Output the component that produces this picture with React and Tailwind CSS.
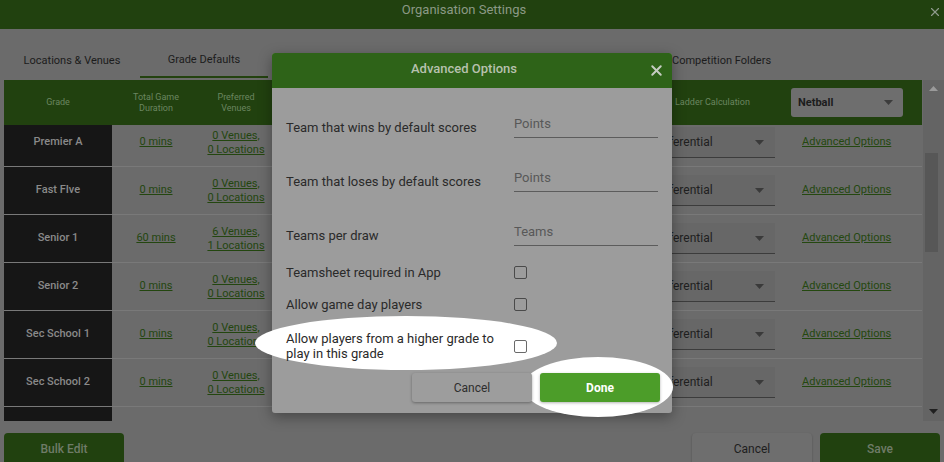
import React from 'react';
import { X } from 'lucide-react';

const rows = [
  { grade: 'Premier A', mins: '0 mins', venues: '0 Venues,', locations: '0 Locations' },
  { grade: 'Fast FIve', mins: '0 mins', venues: '0 Venues,', locations: '0 Locations' },
  { grade: 'Senior 1', mins: '60 mins', venues: '6 Venues,', locations: '1 Locations' },
  { grade: 'Senior 2', mins: '0 mins', venues: '0 Venues,', locations: '0 Locations' },
  { grade: 'Sec School 1', mins: '0 mins', venues: '0 Venues,', locations: '0 Locations' },
  { grade: 'Sec School 2', mins: '0 mins', venues: '0 Venues,', locations: '0 Locations' },
];

const cols = 'grid-cols-[108px_88px_72px_378px_140px_132px]';

const Caret = ({ up, className }) => (
  <svg width="9" height="5" viewBox="0 0 9 5" className={className}>
    <path d={up ? 'M0 5h9L4.5 0z' : 'M0 0h9L4.5 5z'} fill="currentColor" />
  </svg>
);

const Row = ({ r }) => (
  <div className={`grid h-[48px] ${cols} border-b border-[#797979]`}>
    <div className="flex items-center justify-center bg-[#161616] text-[11px] font-medium text-[#8a8a8a]">{r.grade}</div>
    <div className="flex items-center justify-center text-[11px] text-[#23460f] underline">{r.mins}</div>
    <div className="flex flex-col items-center justify-center text-[11px] leading-[14px] text-[#23460f] underline">
      <span>{r.venues}</span>
      <span>{r.locations}</span>
    </div>
    <div />
    <div className="flex items-center">
      <div className="flex h-[31px] w-[125px] items-center justify-between border-b border-[#3c3c3c] bg-[#676767] pl-[4px] pr-[11px] text-[12px] text-[#202020]">
        Differential
        <Caret className="text-[#3a3a3a]" />
      </div>
    </div>
    <div className="flex items-center pl-[12px] text-[11px] text-[#24480f] underline">Advanced Options</div>
  </div>
);

const InputRow = ({ label, placeholder, className }) => (
  <div className={`flex h-[26px] items-end ${className}`}>
    <div className="w-[228px] pb-[2px] text-[13px] leading-[16px] text-[#2a2a2a]">{label}</div>
    <div className="h-[26px] w-[144px] border-b border-[#5c5c5c] pt-[4px] text-[13px] leading-[16px] text-[#585858]">{placeholder}</div>
  </div>
);

const CheckRow = ({ label, className, lit }) => (
  <div className={`flex h-[32px] items-center ${className}`}>
    <div className="w-[218px] text-[13px] leading-[15px] text-[#2a2a2a]">{label}</div>
    <div className="w-[10px]" />
    <div
      className={
        lit
          ? 'h-[13px] w-[13px] rounded-[2px] border border-[#6a6a6a] bg-white'
          : 'h-[13px] w-[13px] rounded-[2px] border border-[#4a4a4a]'
      }
    />
  </div>
);

export default function App() {
  return (
    <div className="relative flex h-[462px] w-[944px] flex-col overflow-hidden bg-[#6b6b6b] font-['Roboto','Liberation_Sans',sans-serif]">
      <div className="grid h-[29px] shrink-0 grid-cols-[24px_1fr_40px] items-start bg-[#21410f]">
        <span />
        <span className="pt-[2px] text-center text-[13px] leading-[16px] text-[#8b9985]">Organisation Settings</span>
        <X size={14} strokeWidth={2} className="mr-[2px] mt-[5px] justify-self-end text-[#8f9a8c]" />
      </div>

      <div className="mt-[15px] flex h-[34px] shrink-0 px-[4px] text-[11px] text-[#1c1c1c]">
        <div className="flex w-[136px] items-center justify-center">Locations &amp; Venues</div>
        <div className="flex w-[128px] items-center justify-center border-b-2 border-[#23420f]">Grade Defaults</div>
        <div className="w-[384px]" />
        <div className="flex items-center pl-[20px]">Competition Folders</div>
      </div>

      <div className="mt-[2px] flex h-[341px] shrink-0 pl-[4px]">
        <div className="flex w-[918px] flex-col">
          <div className={`grid h-[45px] shrink-0 ${cols} items-center bg-[#21410f] text-[9px] leading-[11px] text-[#6b8660]`}>
            <div className="text-center">Grade</div>
            <div className="text-center">Total Game<br />Duration</div>
            <div className="text-center">Preferred<br />Venues</div>
            <div />
            <div className="pl-[25px]">Ladder Calculation</div>
            <div>
              <div className="ml-[1px] flex h-[29px] w-[112px] items-center justify-between rounded-[3px] bg-[#6e6e6e] pl-[7px] pr-[10px] text-[11px] font-bold text-[#1c1c1c]">
                Netball
                <Caret className="text-[#3c3c3c]" />
              </div>
            </div>
          </div>
          <div className="flex-1 overflow-hidden">
            <div className="-mt-[6px]">
              {rows.map((r) => (
                <Row key={r.grade} r={r} />
              ))}
              <div className={`grid h-[48px] ${cols}`}>
                <div className="bg-[#161616]" />
              </div>
            </div>
          </div>
        </div>
        <div className="ml-[1px] flex w-[21px] flex-col bg-[#646464] pb-[7px] pl-[2px] pt-[6px]">
          <Caret up className="ml-[4px] text-[#9a9a9a]" />
          <div className="mt-[62px] h-[99px] w-[13px] bg-[#575757]" />
          <div className="flex-1" />
          <Caret className="ml-[4px] text-[#202020]" />
        </div>
      </div>

      <div className="mt-[12px] flex h-[32px] shrink-0 px-[4px] text-[12px]">
        <div className="flex w-[120px] items-center justify-center rounded-[4px] bg-[#21410f] font-medium text-[#6f7b68]">Bulk Edit</div>
        <div className="ml-auto flex w-[120px] items-center justify-center rounded-[4px] bg-[#6e6e6e] text-[#1e1e1e] shadow-[0_1px_2px_rgba(0,0,0,0.3)]">Cancel</div>
        <div className="ml-[8px] flex w-[120px] items-center justify-center rounded-[4px] bg-[#21410f] font-medium text-[#6f7b68]">Save</div>
      </div>

      <div className="absolute left-[272px] top-[53px] z-20 flex h-[360px] w-[400px] flex-col rounded-[3px] bg-[#9c9c9c] shadow-[0_4px_14px_rgba(0,0,0,0.35)]">
        <div className="absolute left-[-17px] top-[263px] z-[5] h-[54px] w-[302px] rounded-[50%] bg-white" />
        <div className="absolute left-[251px] top-[304px] z-[5] h-[60px] w-[150px] rounded-[50%] bg-white" />

        <div className="grid h-[35px] shrink-0 grid-cols-[24px_1fr_40px] items-center rounded-t-[3px] bg-[#2e6318]">
          <span />
          <span className="mb-[3px] text-center text-[13px] font-medium text-[#b7c1ae]">Advanced Options</span>
          <X size={17} strokeWidth={2.75} className="mr-[7px] justify-self-end text-[#c6cdc2]" />
        </div>

        <div className="relative z-10 flex flex-col pl-[14px]">
          <InputRow className="mt-[24px]" label="Team that wins by default scores" placeholder="Points" />
          <InputRow className="mt-[28px]" label="Team that loses by default scores" placeholder="Points" />
          <InputRow className="mt-[28px]" label="Teams per draw" placeholder="Teams" />
          <CheckRow className="mt-[10px]" label="Teamsheet required in App" />
          <CheckRow label="Allow game day players" />
          <CheckRow className="mt-[10px]" lit label="Allow players from a higher grade to play in this grade" />

          <div className="mt-[11px] flex justify-end gap-[8px] pr-[12px] text-[12px]">
            <div className="flex h-[29px] w-[120px] items-center justify-center rounded-[3px] bg-[#9d9d9d] text-[#2e2e2e] shadow-[0_1px_3px_rgba(0,0,0,0.35)]">Cancel</div>
            <div className="flex h-[29px] w-[120px] items-center justify-center rounded-[3px] bg-[#4c9d29] font-bold text-white shadow-[0_1px_3px_rgba(0,0,0,0.3)]">Done</div>
          </div>
        </div>
      </div>
    </div>
  );
}
